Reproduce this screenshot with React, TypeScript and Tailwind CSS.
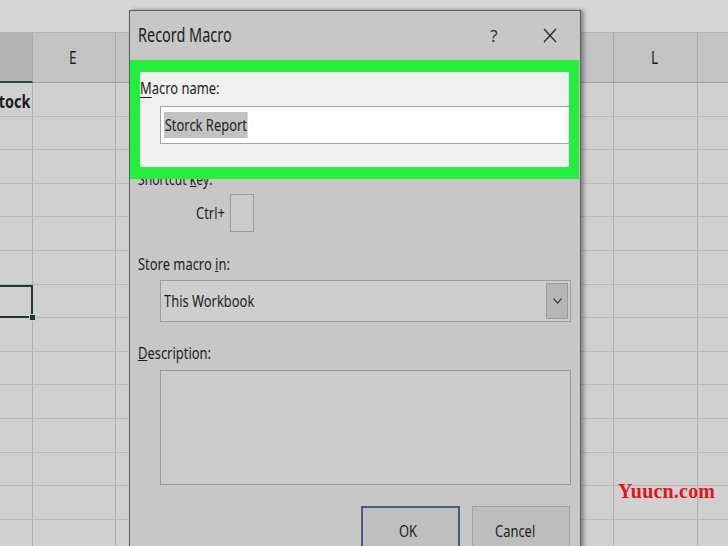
import React from "react";

const cols = [
  { w: 33, l: "" },
  { w: 83, l: "E" },
  { w: 84, l: "F" },
  { w: 83, l: "G" },
  { w: 84, l: "H" },
  { w: 83, l: "I" },
  { w: 84, l: "J" },
  { w: 80, l: "K" },
  { w: 84, l: "L" },
  { w: 40, l: "" },
];

function T({ children, className = "" }: { children: React.ReactNode; className?: string }) {
  return <span className={"inline-block origin-left scale-x-[0.76] whitespace-nowrap " + className}>{children}</span>;
}

export default function App() {
  const rows = Array.from({ length: 14 });
  return (
    <div className="relative w-[728px] h-[546px] overflow-hidden bg-[#d0d0d0] font-['Noto_Sans',sans-serif] text-[#1c1c1c]">
      {/* top bar */}
      <div className="h-[33px] bg-[#d6d6d6] border-b border-[#b4b4b4]" />
      {/* header row */}
      <div className="flex h-[50px] bg-[#c3c3c3]">
        {cols.map((c, i) => (
          <div
            key={i}
            style={{ width: c.w }}
            className={
              "shrink-0 flex items-center justify-center border-r border-[#a9a9a9] text-[18px] " +
              (i === 0 ? "bg-[#b5b5b5] border-b-2 border-b-[#2a4a35]" : "border-b border-b-[#9e9e9e]")
            }
          >
            <T className="origin-center">{c.l}</T>
          </div>
        ))}
      </div>
      {/* rows */}
      {rows.map((_, r) => (
        <div key={r} className="flex h-[33.6px] border-b border-[#b7b7b7]">
          {cols.map((c, i) => {
            if (i === 0 && r === 6) {
              return (
                <div
                  key={i}
                  style={{ width: c.w }}
                  className="shrink-0 relative border-y-2 border-r-2 border-[#22392a] -mb-px"
                >
                  <div className="absolute right-[-5px] bottom-[-5px] w-[7px] h-[7px] bg-[#22392a] border border-[#d0d0d0]" />
                </div>
              );
            }
            return (
              <div
                key={i}
                style={{ width: c.w }}
                className={
                  "shrink-0 border-r border-[#b0b0b0] flex items-center overflow-hidden " +
                  (i === 0 ? "justify-end pr-[2px] pt-[5px]" : "")
                }
              >
                {i === 0 && r === 0 ? (
                  <span className="whitespace-nowrap font-bold text-[18px] inline-block origin-right scale-x-[0.8]">Stock</span>
                ) : null}
              </div>
            );
          })}
        </div>
      ))}

      {/* watermark */}
      <div className="absolute left-[618px] top-[481px] text-[20px] tracking-[0.2px] font-bold text-[#e3141b] font-['Liberation_Serif',serif] leading-none">
        Yuucn.com
      </div>

      {/* dialog */}
      <div className="absolute left-[129px] top-[10px] w-[452px] h-[560px] bg-[#c7c7c7] border border-[#5c5c5c] shadow-[3px_0_4px_rgba(0,0,0,0.35)] flex flex-col">
        {/* title bar */}
        <div className="h-[49px] flex items-center pl-[8px] shrink-0">
          <T className="text-[19px]">Record Macro</T>
          <div className="ml-auto flex items-center">
            <div className="w-[46px] flex justify-center text-[17px] text-[#333]">?</div>
            <div className="w-[46px] flex justify-center ml-[10px] mr-[7px]">
              <svg width="14" height="15" viewBox="0 0 14 15" fill="none" stroke="#2a2a2a" strokeWidth="1.3">
                <path d="M1 1 L13 14 M13 1 L1 14" />
              </svg>
            </div>
          </div>
        </div>

        {/* highlighted group */}
        <div className="relative z-10 shrink-0 w-[449px] h-[119px] border-x-[10px] border-t-[12px] border-b-[12px] border-[#22f03c] bg-[#f0f0f0] flex flex-col">
          <div className="mt-[5px] h-[22px] flex items-center text-[17px]">
            <T>
              <span className="underline underline-offset-[3px]">M</span>acro name:
            </T>
          </div>
          <div className="mt-[7px] ml-[20px] h-[38px] bg-white border border-r-0 border-[#a3a3a3] flex items-center pl-[3px]">
            <T className="text-[17px] bg-[#c2c2c2] leading-[26px] px-[1px]">Storck Report</T>
          </div>
        </div>

        <div className="-mt-[10px] h-[20px] pl-[8px] flex items-center text-[16px]">
          <T>
            Shortcut <span className="underline">k</span>ey:
          </T>
        </div>

        <div className="mt-[5px] flex items-center pl-[66px]">
          <T className="text-[17px] w-[34px]">Ctrl+</T>
          <div className="w-[24px] h-[38px] bg-[#cbcbcb] border border-[#9a9a9a]" />
        </div>

        <div className="mt-[21px] h-[22px] pl-[8px] flex items-center text-[17px]">
          <T>
            Store macro <span className="underline">i</span>n:
          </T>
        </div>

        <div className="mt-[5px] ml-[30px] w-[411px] h-[42px] bg-[#cecece] border border-[#9c9c9c] flex items-center pl-[3px] pr-[2px]">
          <T className="text-[17px]">This Workbook</T>
          <div className="ml-auto w-[22px] h-[36px] bg-[#b6b6b6] border border-[#9a9a9a] flex items-center justify-center">
            <svg width="9" height="6" viewBox="0 0 9 6" fill="none" stroke="#404040" strokeWidth="1.2">
              <path d="M0.5 0.5 L4.5 5 L8.5 0.5" />
            </svg>
          </div>
        </div>

        <div className="mt-[20px] h-[22px] pl-[8px] flex items-center text-[17px]">
          <T>
            <span className="underline">D</span>escription:
          </T>
        </div>

        <div className="mt-[6px] ml-[30px] w-[411px] h-[115px] bg-[#cbcbcb] border border-[#999999]" />

        <div className="mt-[21px] flex pl-[231px] gap-[12px]">
          <div className="w-[99px] h-[55px] bg-[#bfbfbf] border-2 border-[#4d5b7c] flex items-start justify-center pt-[10px] text-[17px]">
            <T className="origin-center">OK</T>
          </div>
          <div className="w-[98px] h-[55px] bg-[#bdbdbd] border border-[#a2a2a2] flex items-start justify-center pt-[11px] text-[17px]">
            <T className="origin-center">Cancel</T>
          </div>
        </div>
      </div>
    </div>
  );
}
